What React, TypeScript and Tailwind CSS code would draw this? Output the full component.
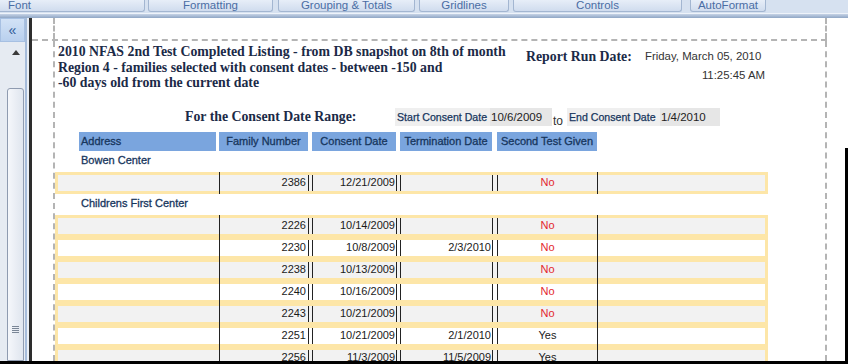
type Row = { fn: string; cd: string; td: string; st: string };

const bowen: Row[] = [{ fn: "2386", cd: "12/21/2009", td: "", st: "No" }];
const childrens: Row[] = [
  { fn: "2226", cd: "10/14/2009", td: "", st: "No" },
  { fn: "2230", cd: "10/8/2009", td: "2/3/2010", st: "No" },
  { fn: "2238", cd: "10/13/2009", td: "", st: "No" },
  { fn: "2240", cd: "10/16/2009", td: "", st: "No" },
  { fn: "2243", cd: "10/21/2009", td: "", st: "No" },
  { fn: "2251", cd: "10/21/2009", td: "2/1/2010", st: "Yes" },
  { fn: "2256", cd: "11/3/2009", td: "11/5/2009", st: "Yes" },
];

function DataRow({ r, gray }: { r: Row; gray: boolean }) {
  return (
    <div
      className={
        "flex shrink-0 h-[22px] w-[713px] border-x-[3px] border-[#fde6a8] text-[11px] leading-[14px] text-[#1a1a1a] " +
        (gray ? "bg-[#f2f2f2]" : "bg-white")
      }
    >
      <div className="w-[161px] border-y-[3px] border-[#fde6a8]" />
      <div className="w-[1px] bg-[#222]" />
      <div className="w-[377px] flex border-y-[3px] border-[#fde6a8]">
        <div className="w-[89px] border-r border-r-[#222] text-right pr-[2px]">{r.fn}</div>
        <div className="w-[3px]" />
        <div className="w-[85px] border-x border-x-[#222] text-right pr-[1px]">{r.cd}</div>
        <div className="w-[3px]" />
        <div className="w-[93px] border-x border-x-[#222] text-right pr-[1px]">{r.td}</div>
        <div className="w-[4px]" />
        <div
          className={
            "w-[100px] border-l border-l-[#222] text-center " +
            (r.st === "No" ? "text-[#e3262e]" : "text-[#1a1a1a]")
          }
        >
          {r.st}
        </div>
      </div>
      <div className="w-[1px] bg-[#222]" />
      <div className="flex-1 border-y-[3px] border-[#fde6a8]" />
    </div>
  );
}

function GroupLabel({ text }: { text: string }) {
  return (
    <div className="h-[21px] shrink-0 pl-[26px] text-[11px] leading-[18px] text-[#17365d] [-webkit-text-stroke:0.3px]">
      {text}
    </div>
  );
}

export default function App() {
  const tab =
    "h-[12px] bg-[linear-gradient(#e7eef8,#d0dcee)] border-x border-b border-[#a3b6d1] rounded-b-[3px] text-center whitespace-nowrap";
  return (
    <div className="w-[848px] h-[364px] overflow-hidden bg-white flex flex-col font-['Liberation_Sans',Arial,sans-serif]">
      {/* ribbon tabs */}
      <div className="h-[13px] shrink-0 bg-[#d6e1f0] flex text-[11.5px] leading-[11px] text-[#4a6da4] overflow-hidden">
        <div className="w-[145px] h-[12px] pl-[8px] bg-[linear-gradient(#e7eef8,#d0dcee)] border-r border-b border-[#a3b6d1] rounded-br-[3px]">
          Font
        </div>
        <div className={"ml-[3px] w-[125px] " + tab}>Formatting</div>
        <div className={"ml-[5px] w-[137px] " + tab}>Grouping &amp; Totals</div>
        <div className={"ml-[4px] w-[90px] " + tab}>Gridlines</div>
        <div className={"ml-[4px] w-[169px] " + tab}>Controls</div>
        <div className={"ml-[8px] w-[76px] " + tab}>AutoFormat</div>
      </div>
      <div className="h-[5px] shrink-0 border-t border-[#eef3fa] bg-[linear-gradient(#c6d3e6,#8fa6c5)]" />

      {/* body */}
      <div className="flex-1 flex min-h-0">
        {/* left nav / scrollbar */}
        <div className="w-[25px] shrink-0 flex flex-col bg-[#e6ebf2]">
          <div className="h-[24px] shrink-0 bg-[linear-gradient(#d2e2f6,#b9d0ee)] border border-[#a7c0e2] flex items-center justify-center text-[#2f5a96] text-[14px] leading-none">
            «
          </div>
          <div className="ml-[7px] w-[17px] flex-1 flex flex-col">
            <div className="h-[20px] shrink-0 flex items-center justify-center">
              <svg width="8" height="5" viewBox="0 0 8 5">
                <polygon points="0,5 8,5 4,0" fill="#3a3a3a" />
              </svg>
            </div>
            <div className="h-[26px] shrink-0" />
            <div className="flex-1 rounded-t-[3px] border border-[#8f9bb0] bg-[linear-gradient(90deg,#f5f7fb,#dfe5ee)] flex flex-col items-center">
              <div className="mt-[237px] flex flex-col gap-[1px]">
                <div className="w-[7px] h-[1px] bg-[#7a8696]" />
                <div className="w-[7px] h-[1px] bg-[#7a8696]" />
                <div className="w-[7px] h-[1px] bg-[#7a8696]" />
                <div className="w-[7px] h-[1px] bg-[#7a8696]" />
              </div>
            </div>
          </div>
        </div>
        <div className="w-[2px] shrink-0 bg-[#a6bcda]" />
        <div className="w-[2px] shrink-0 bg-[#e9eef5]" />
        <div className="w-[3px] shrink-0 bg-[#2d2d2d]" />

        {/* report canvas */}
        <div className="flex-1 flex min-w-0">
          <div className="w-[795px] shrink-0 flex flex-col">
            <div className="h-[23px] shrink-0 flex border-b-2 border-dashed border-[#b4b4b4]">
              <div className="w-[23px] border-r-2 border-dashed border-[#b4b4b4]" />
              <div className="w-[772px] border-r-2 border-dashed border-[#b4b4b4]" />
            </div>
            <div className="flex-1 flex min-h-0">
              <div className="w-[23px] shrink-0 border-r-2 border-dashed border-[#b4b4b4]" />
              <div className="w-[772px] shrink-0 border-r-2 border-dashed border-[#b4b4b4] flex flex-col overflow-hidden">
                {/* report header */}
                <div className="h-[64px] shrink-0 flex">
                  <div className="w-[471px] pl-[3px] pt-[3px] font-['Liberation_Serif',serif] font-bold text-[13.8px] leading-[15.5px] text-[#1b2a47] whitespace-nowrap">
                    2010 NFAS 2nd Test Completed Listing - from DB snapshot on 8th of month
                    <br />
                    Region 4 - families selected with consent dates - between -150 and
                    <br />
                    -60 days old from the current date
                  </div>
                  <div className="w-[117px] pt-[8px] font-['Liberation_Serif',serif] font-bold text-[13.8px] leading-[16px] text-[#1b2a47] whitespace-nowrap">
                    Report Run Date:
                  </div>
                  <div className="w-[122px] pt-[6px] text-[11.4px] text-[#333] whitespace-nowrap">
                    <div className="leading-[19px] pl-[2px]">Friday, March 05, 2010</div>
                    <div className="leading-[19px] text-right">11:25:45 AM</div>
                  </div>
                </div>

                {/* date range */}
                <div className="mt-[3px] h-[18px] shrink-0 flex items-center pl-[130px] whitespace-nowrap">
                  <div className="w-[210px] font-['Liberation_Serif',serif] font-bold text-[13.8px] leading-[18px] text-[#1b2a47]">
                    For the Consent Date Range:
                  </div>
                  <div className="w-[95px] h-full bg-[#efefef] pl-[2px] text-[10.6px] leading-[18px] text-[#17365d] [-webkit-text-stroke:0.25px]">
                    Start Consent Date
                  </div>
                  <div className="w-[62px] h-full bg-[#e6e6e6] pl-[1px] text-[11.5px] leading-[18px] text-[#222]">
                    10/6/2009
                  </div>
                  <div className="w-[15px] h-full pl-[1px] pt-[5px] text-[12px] leading-[16px] text-[#333]">
                    to
                  </div>
                  <div className="w-[93px] h-full bg-[#efefef] pl-[2px] text-[10.6px] leading-[18px] text-[#17365d] [-webkit-text-stroke:0.25px]">
                    End Consent Date
                  </div>
                  <div className="w-[60px] h-full bg-[#e6e6e6] pl-[1px] text-[11.5px] leading-[18px] text-[#222]">
                    1/4/2010
                  </div>
                </div>

                {/* column headers */}
                <div className="mt-[6px] h-[19px] shrink-0 flex pl-[24px] text-[11px] leading-[19px] text-[#17365d] [-webkit-text-stroke:0.3px] whitespace-nowrap">
                  <div className="w-[137px] bg-[#7aa5de] pl-[2px]">Address</div>
                  <div className="ml-[3px] w-[89px] bg-[#7aa5de] text-center">Family Number</div>
                  <div className="ml-[4px] w-[84px] bg-[#7aa5de] text-center">Consent Date</div>
                  <div className="ml-[4px] w-[92px] bg-[#7aa5de] text-center">Termination Date</div>
                  <div className="ml-[5px] w-[100px] bg-[#7aa5de] text-center">Second Test Given</div>
                </div>

                <GroupLabel text="Bowen Center" />
                {bowen.map((r, i) => (
                  <DataRow key={r.fn} r={r} gray={i % 2 === 0} />
                ))}
                <GroupLabel text="Childrens First Center" />
                {childrens.map((r, i) => (
                  <DataRow key={r.fn} r={r} gray={i % 2 === 0} />
                ))}
              </div>
            </div>
          </div>
          <div className="flex-1" />
          <div className="w-[3px] shrink-0 mt-[130px] bg-black" />
        </div>
      </div>
      <div className="h-[3px] shrink-0 bg-black" />
    </div>
  );
}
